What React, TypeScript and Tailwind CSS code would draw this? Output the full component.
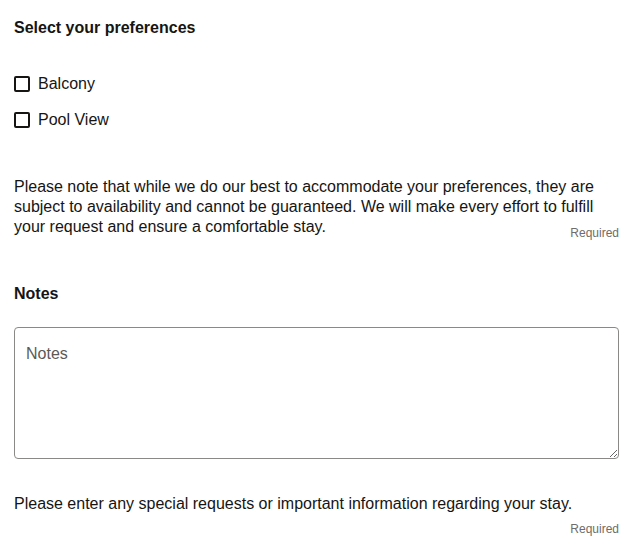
export default function App() {
  return (
    <div
      className="w-[633px] bg-white px-[14px] pt-[18px] text-[#161513]"
      style={{ fontFamily: '"Liberation Sans", Arial, sans-serif' }}
    >
      <h2 className="text-[16px] font-bold leading-[20px]">Select your preferences</h2>

      <div className="mt-[36px] flex flex-col gap-[16px]">
        {['Balcony', 'Pool View'].map(label => (
          <label key={label} className="flex items-center gap-[8px] text-[16px] leading-[20px]">
            <span className="h-[16px] w-[16px] rounded-[2px] border-2 border-[#161513]" />
            {label}
          </label>
        ))}
      </div>

      <p className="mt-[47px] pr-[4px] text-[16px] leading-[20px]">
        Please note that while we do our best to accommodate your preferences, they are subject to
        availability and cannot be guaranteed. We will make every effort to fulfill your request
        and ensure a comfortable stay.
        <span className="float-right -mr-[4px] mt-[9px] text-[12px] leading-[14px] text-[#6f6c69]">
          Required
        </span>
      </p>

      <h2 className="mt-[47px] text-[16px] font-bold leading-[20px]">Notes</h2>

      <textarea
        placeholder="Notes"
        className="mt-[23px] block h-[132px] w-full rounded-[4px] border border-[#8b8986] px-[11px] py-[16px] text-[16px] leading-[20px] placeholder:text-[#5c5955] outline-none"
      />

      <p className="mt-[35px] text-[16px] leading-[20px]">
        Please enter any special requests or important information regarding your stay.
      </p>
      <div className="mt-[8px] text-right text-[12px] leading-[14px] text-[#6f6c69]">Required</div>
    </div>
  );
}
